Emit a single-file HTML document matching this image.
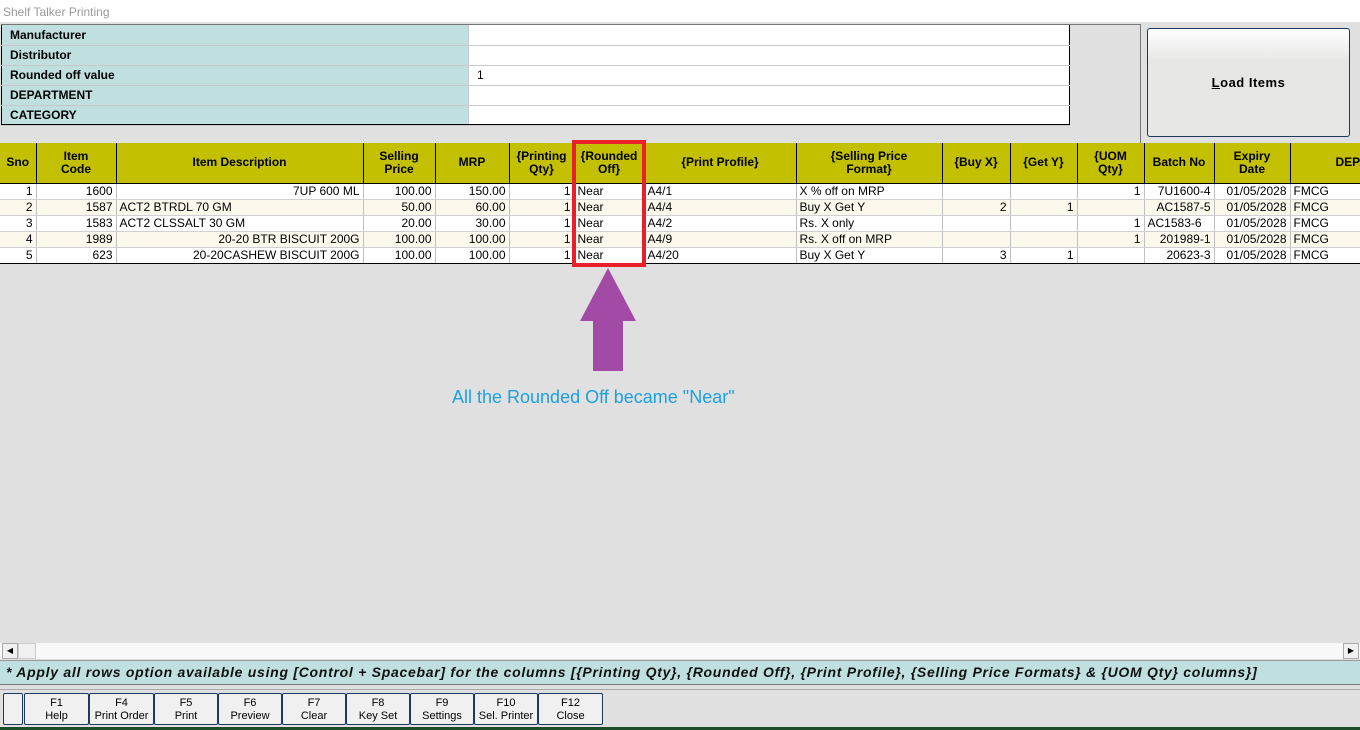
<!DOCTYPE html><html><head><style>
*{box-sizing:border-box;margin:0;padding:0}
body{width:1360px;height:730px;background:#e0e0e0;font-family:"Liberation Sans","DejaVu Sans",sans-serif;font-size:12px;position:relative;overflow:hidden;color:#000}
.a{position:absolute}
.top td{height:20px;border-bottom:1px solid #c8c8c8;padding-left:8px;font-size:12px}
.top td.l{background:#c0e0e0;font-weight:bold;width:467px;border-right:1px solid #c8c8c8}
.top td.v{background:#fff}
table{border-collapse:collapse}
.g th{background:#c2c000;font-weight:bold;font-size:12px;border-right:1px solid #000;height:40px;line-height:13px;text-align:center;border-bottom:1px solid #000}
.g td{height:16px;border-right:1px solid #c0c0c0;border-bottom:1px solid #d0d0d0;padding:0 3px;white-space:nowrap;font-size:12px}
.g tr:nth-child(odd) td{background:#fdf8ec}
.g tr:nth-child(even) td{background:#fff}
.r{text-align:right}
.btn{position:absolute;top:693px;height:32px;border:1px solid #1a3a60;background:#f0f0f0;border-radius:2px;text-align:center;font-size:11px;line-height:13px;padding-top:3px}
</style></head><body>
<div class="a" style="left:0;top:0;width:1360px;height:22px;background:#fff"></div>
<div class="a" style="left:3px;top:5px;color:#999;font-size:12px">Shelf Talker Printing</div>
<div class="a" style="left:1px;top:24px;width:1140px;height:119px;border-top:1px solid #777;border-right:1px solid #777"></div>
<table class="a top" style="left:1px;top:25px;width:1069px;border:1px solid #000;border-top:none">
<tr><td class="l">Manufacturer</td><td class="v"></td></tr>
<tr><td class="l">Distributor</td><td class="v"></td></tr>
<tr><td class="l">Rounded off value</td><td class="v">1</td></tr>
<tr><td class="l">DEPARTMENT</td><td class="v"></td></tr>
<tr><td class="l">CATEGORY</td><td class="v"></td></tr>
</table>
<div class="a" style="left:1px;top:124px;width:1069px;height:1px;background:#000"></div>
<div class="a" style="left:1147px;top:28px;width:203px;height:109px;border:1px solid #1a3a60;border-radius:3px;background:linear-gradient(#fff,#e6e6e5 30%,#e6e6e5);text-align:center;line-height:107px;font-weight:bold;font-size:13px;letter-spacing:0.5px"><u>L</u>oad Items</div>
<div class="a" style="left:0;top:143px;width:1360px;height:122px;overflow:hidden">
<table class="g" style="width:1400px;table-layout:fixed">
<colgroup><col style="width:36px"><col style="width:80px"><col style="width:247px"><col style="width:72px"><col style="width:74px"><col style="width:65px"><col style="width:70px"><col style="width:152px"><col style="width:146px"><col style="width:68px"><col style="width:67px"><col style="width:67px"><col style="width:70px"><col style="width:76px"><col style="width:110px"></colgroup>
<tr><th>Sno</th><th>Item<br>Code</th><th>Item Description</th><th>Selling<br>Price</th><th>MRP</th><th>{Printing<br>Qty}</th><th>{Rounded<br>Off}</th><th>{Print Profile}</th><th>{Selling Price<br>Format}</th><th>{Buy X}</th><th>{Get Y}</th><th>{UOM<br>Qty}</th><th>Batch No</th><th>Expiry<br>Date</th><th style="text-align:left;padding-left:45px">DEPARTMENT</th></tr>
<tr><td class="r">1</td><td class="r">1600</td><td class="r">7UP 600 ML</td><td class="r">100.00</td><td class="r">150.00</td><td class="r">1</td><td>Near</td><td>A4/1</td><td>X % off on MRP</td><td></td><td></td><td class="r">1</td><td class="r">7U1600-4</td><td class="r">01/05/2028</td><td>FMCG</td></tr>
<tr><td class="r">2</td><td class="r">1587</td><td>ACT2 BTRDL 70 GM</td><td class="r">50.00</td><td class="r">60.00</td><td class="r">1</td><td>Near</td><td>A4/4</td><td>Buy X Get Y</td><td class="r">2</td><td class="r">1</td><td></td><td class="r">AC1587-5</td><td class="r">01/05/2028</td><td>FMCG</td></tr>
<tr><td class="r">3</td><td class="r">1583</td><td>ACT2 CLSSALT 30 GM</td><td class="r">20.00</td><td class="r">30.00</td><td class="r">1</td><td>Near</td><td>A4/2</td><td>Rs. X only</td><td></td><td></td><td class="r">1</td><td>AC1583-6</td><td class="r">01/05/2028</td><td>FMCG</td></tr>
<tr><td class="r">4</td><td class="r">1989</td><td class="r">20-20 BTR BISCUIT 200G</td><td class="r">100.00</td><td class="r">100.00</td><td class="r">1</td><td>Near</td><td>A4/9</td><td>Rs. X off on MRP</td><td></td><td></td><td class="r">1</td><td class="r">201989-1</td><td class="r">01/05/2028</td><td>FMCG</td></tr>
<tr><td class="r">5</td><td class="r">623</td><td class="r">20-20CASHEW BISCUIT 200G</td><td class="r">100.00</td><td class="r">100.00</td><td class="r">1</td><td>Near</td><td>A4/20</td><td>Buy X Get Y</td><td class="r">3</td><td class="r">1</td><td></td><td class="r">20623-3</td><td class="r">01/05/2028</td><td>FMCG</td></tr>
</table></div>
<div class="a" style="left:0;top:263px;width:1360px;height:1px;background:#000"></div>
<div class="a" style="left:572px;top:140px;width:74px;height:127px;border:4px solid #e8202a"></div>
<svg class="a" style="left:578px;top:266px" width="60" height="108"><polygon points="30,2 2,55 15,55 15,105 45,105 45,55 58,55" fill="#a24aa6"/></svg>
<div class="a" style="left:452px;top:387px;color:#1ca0e0;font-size:18px">All the Rounded Off became "Near"</div>
<div class="a" style="left:0;top:643px;width:1360px;height:16px;background:#f8f8f8"></div>
<div class="a" style="left:2px;top:643px;width:16px;height:16px;background:#f0f0f0;border:1px solid #aaa;font-size:8px;text-align:center;line-height:14px">◀</div>
<div class="a" style="left:18px;top:643px;width:18px;height:16px;background:#f0f0f0;border:1px solid #ccc"></div>
<div class="a" style="left:1343px;top:643px;width:16px;height:16px;background:#f0f0f0;border:1px solid #aaa;font-size:8px;text-align:center;line-height:14px">▶</div>
<div class="a" style="left:0;top:660px;width:1360px;height:25px;background:#c0e0e0;border-bottom:1px solid #777;border-top:1px solid #999;font-weight:bold;font-style:italic;font-size:14px;line-height:22px;padding-left:6px;color:#111;letter-spacing:0.72px;white-space:nowrap">* Apply all rows option available using [Control + Spacebar] for the columns [{Printing Qty}, {Rounded Off}, {Print Profile}, {Selling Price Formats} &amp; {UOM Qty} columns}]</div>
<div class="a" style="left:0;top:689px;width:1360px;height:1px;background:#aaa"></div>
<div class="btn" style="left:3px;width:20px"></div>
<div class="btn" style="left:24px;width:65px">F1<br>Help</div>
<div class="btn" style="left:89px;width:65px">F4<br>Print Order</div>
<div class="btn" style="left:154px;width:64px">F5<br>Print</div>
<div class="btn" style="left:218px;width:64px">F6<br>Preview</div>
<div class="btn" style="left:282px;width:64px">F7<br>Clear</div>
<div class="btn" style="left:346px;width:64px">F8<br>Key Set</div>
<div class="btn" style="left:410px;width:64px">F9<br>Settings</div>
<div class="btn" style="left:474px;width:64px">F10<br>Sel. Printer</div>
<div class="btn" style="left:538px;width:65px">F12<br>Close</div>
<div class="a" style="left:0;top:727px;width:1360px;height:3px;background:#1e4d2b"></div>
</body></html>
